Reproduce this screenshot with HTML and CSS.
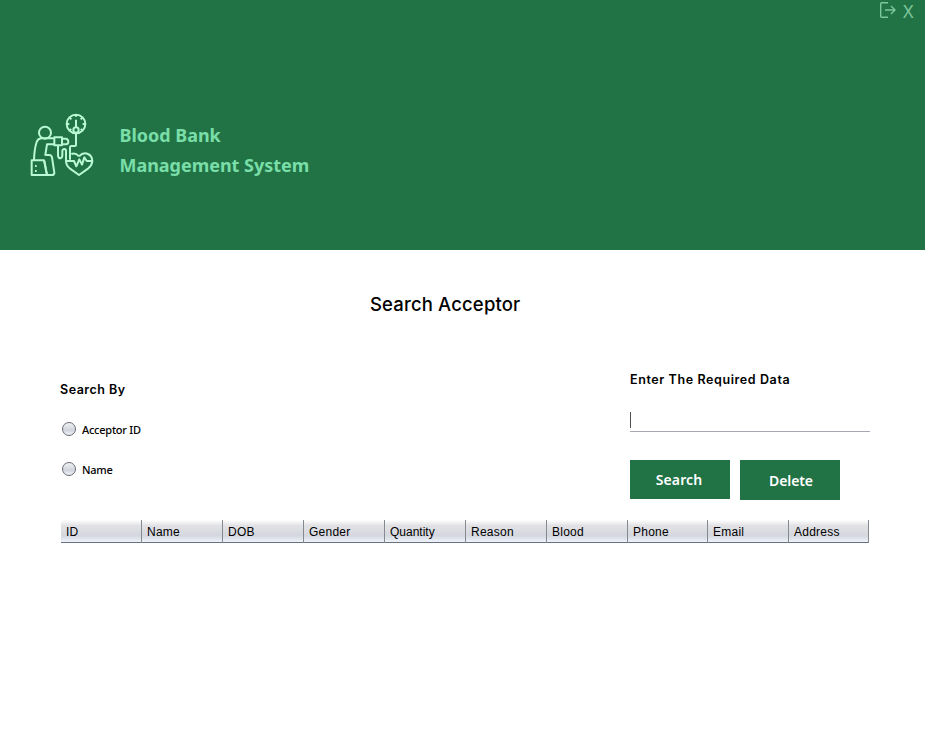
FILE: index.html
```html
<!DOCTYPE html>
<html lang="en">
<head>
<meta charset="utf-8">
<title>Search Acceptor</title>
<link rel="stylesheet" href="styles.css">
</head>
<body>
<header class="banner">
  <div class="window-actions">
    <svg class="logout" viewBox="0 0 16 16"><path d="M8 .7H1.700Q.7.700.7 1.700V14.300Q.7 15.300 1.700 15.300H8M5 8H15M11 4L15 8L11 12"/></svg>
    <span class="close">X</span>
  </div>
  <div class="brand">
    <svg class="logo" viewBox="0 0 270 240">
      <circle cx="75" cy="83" r="18"/>
      <circle cx="168" cy="57" r="28"/>
      <circle cx="168" cy="75" r="8"/>
      <path d="M168 67V44M168 29V35M140 57H148M188 57H196M149 38L154 43M187 38L182 43M149 76L154 72M187 76L182 72"/>
      <path d="M168 84V120Q168 123 165 123H154Q150 123 150 127V164"/>
      <path d="M103 100H63Q54 101 50 111Q43 131 42 166M103 118H81L76 150H89Q95 151 96 157L103 203Q103 210 95 210H86Q81 210 80 205L73 167"/>
      <path d="M35 166H72L80 205Q81 210 86 210H35Z"/>
      <rect x="103" y="97" width="23" height="24"/>
      <path d="M126 101H138Q145 103 145 110Q145 117 138 118H126M114 122V151Q115 160 121 160Q127 159 127 151V138Q128 132 133 132Q138 132 138 138V168"/>
      <path d="M177 154Q166 142 154 147M177 154Q190 140 204 147Q217 153 217 169Q215 182 205 190L177 210L149 190Q138 181 138 168"/>
      <path d="M138 168H162L169 184L178 163L186 179L193 157L200 168H217"/>
      <path d="M45 183H50M45 198H50"/>
    </svg>
    <div class="brand-name"><div>Blood Bank</div><div>Management System</div></div>
  </div>
</header>
<main>
  <h1>Search Acceptor</h1>
  <div class="controls">
    <section class="search-by">
      <h2>Search By</h2>
      <div class="option"><i class="radio"></i><span>Acceptor ID</span></div>
      <div class="option"><i class="radio"></i><span>Name</span></div>
    </section>
    <section class="query">
      <h2>Enter The Required Data</h2>
      <div class="field"><i class="caret"></i></div>
      <div class="buttons">
        <div class="button search">Search</div>
        <div class="button delete">Delete</div>
      </div>
    </section>
  </div>
  <div class="table-head">
    <div>ID</div><div>Name</div><div>DOB</div><div>Gender</div><div class="quantity">Quantity</div><div>Reason</div><div>Blood</div><div>Phone</div><div>Email</div><div>Address</div>
  </div>
</main>
</body>
</html>
```

FILE: styles.css
```css
* { box-sizing: border-box; }
body { margin: 0; background: #fff; color: #000; font-family: "Liberation Sans", sans-serif; }
.banner { height: 250px; background: #217346; }
.window-actions { height: 24px; padding: 2px 11.5px 0 0; display: flex; justify-content: flex-end; gap: 6.5px; color: #7cc69c; }
.logout { width: 16px; height: 16px; fill: none; stroke: currentColor; stroke-width: 1.4; }
.close { margin-top: -1px; font: 18px/20px "Noto Sans", sans-serif; }
.brand { display: flex; padding: 81px 0 0 20px; }
.logo { width: 90px; height: 80px; fill: none; stroke: #b9f8d4; stroke-width: 6; stroke-linejoin: round; }
.brand-name { padding: 15px 0 0 9.5px; color: #7adea8; font: bold 18px/30px "Noto Sans", sans-serif; letter-spacing: -.03px; }
h1 { margin: 0; padding: 40px 0 0 370px; font: 450 18.5px/28px Inter, sans-serif; letter-spacing: .15px; }
.controls { display: flex; height: 202px; padding: 50px 55px 0 60px; justify-content: space-between; }
h2 { margin: 0; font: 600 12.5px/24px Inter, sans-serif; letter-spacing: .6px; white-space: nowrap; }
.search-by { padding-top: 10px; }
.search-by h2 { margin-bottom: 7px; letter-spacing: .5px; }
.option { display: flex; align-items: center; height: 40px; gap: 6px; padding-left: 2px; font: 500 11px/16px "Noto Sans", sans-serif; letter-spacing: -.25px; }
.option span { padding-top: 2px; }
.radio { width: 14px; height: 14px; border: 1px solid #686c72; border-radius: 50%; background: linear-gradient(#f2f2f3, #d0d3dc 60%, #f0f3fb); }
.query { width: 240px; }
.field { height: 22px; margin-top: 18px; padding-top: 2px; border-bottom: 1px solid #a5a7b2; }
.caret { display: block; width: 1px; height: 16px; background: #505050; }
.buttons { display: flex; align-items: flex-start; gap: 10px; margin-top: 28px; }
.button { width: 100px; height: 39px; background: #217346; color: #fff; font: 600 14px/39px "Noto Sans", sans-serif; letter-spacing: .1px; text-align: center; }
.search { padding-right: 2px; }
.delete { height: 40px; line-height: 41px; padding-left: 2px; letter-spacing: -.1px; }
.table-head { display: grid; grid-template-columns: repeat(7, 81px) 80px 81px 80px; width: 808px; height: 23px; margin-left: 61px; background: linear-gradient(#fff, #e2e2e5 25%, #d5d7df 72%, #eff3fc); border-bottom: 1px solid #687080; }
.table-head div { border-right: 1px solid #858990; padding: 1px 0 0 5px; font-size: 12px; line-height: 22px; letter-spacing: .25px; }
.table-head .quantity { letter-spacing: 0; }
```
